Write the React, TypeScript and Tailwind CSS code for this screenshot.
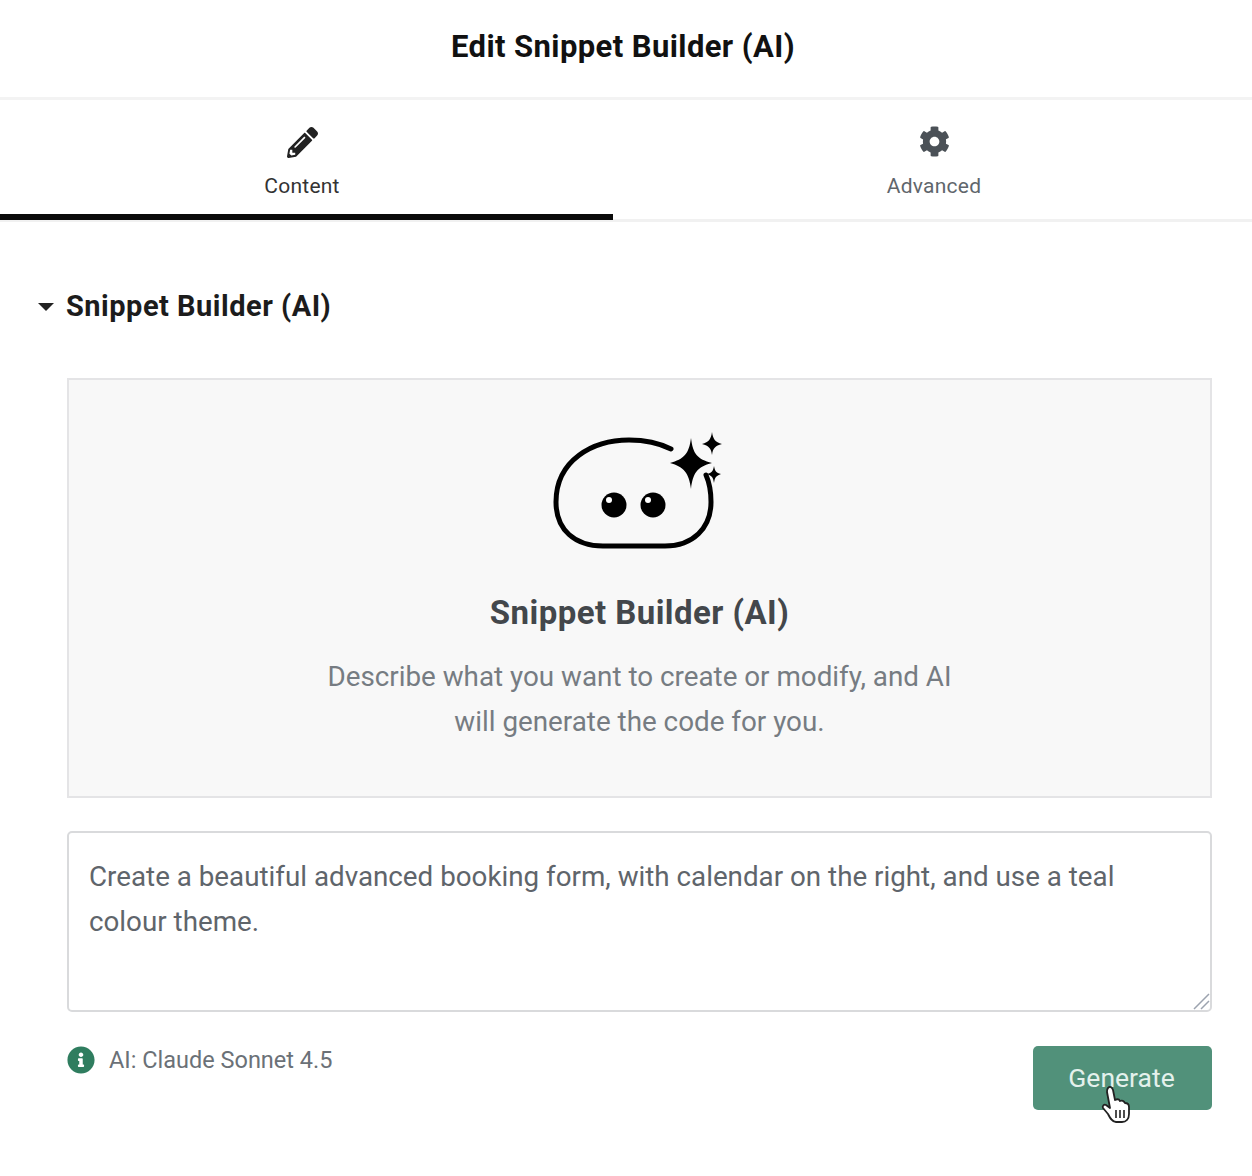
import { FaCog, FaInfoCircle, FaPencilAlt } from "react-icons/fa";

const Mascot = () => (
  <svg width="170" height="120" viewBox="0 0 170 120" className="block">
    <path
      d="M118 17 C104 10 92 8 76 8 C40 8 3 28 3 70 C3 98 22 114 50 114 L112 114 C140 114 158 96 158 70 C158 60 157 52 153 43"
      fill="none"
      stroke="#000"
      strokeWidth="5"
      strokeLinecap="round"
    />
    <path d="M138 6 C140 22 144 27 159 31 C144 35 140 41 138 57 C136 41 131 35 117 31 C131 27 136 22 138 6 Z" fill="#000" />
    <path d="M159 0 C160 7 162 10 169 12 C162 14 160 16 159 23 C158 16 156 14 149 12 C156 10 158 7 159 0 Z" fill="#000" />
    <path d="M161 34 C162 39 163 41 168 42 C163 44 162 45 161 51 C160 45 159 44 154 42 C159 41 160 39 161 34 Z" fill="#000" />
    <circle cx="61" cy="73" r="12.5" fill="#000" />
    <circle cx="100" cy="73" r="12.5" fill="#000" />
    <circle cx="56" cy="68" r="3" fill="#fff" />
    <circle cx="95" cy="68" r="3" fill="#fff" />
  </svg>
);

const HandCursor = () => (
  <svg width="30" height="40" viewBox="0 0 30 40" className="block">
    <path
      d="M7 3 C9 1 11 2 12 5 L14 15 C16 14 18 14 19 16 C21 15 23 16 24 18 C26 18 28 19 28 22 L28 29 C28 34 25 37 21 37 L15 37 C11 37 9 33 7 29 L2 23 C1 21 3 19 5 20 L9 23 L6 7 C6 5 6 4 7 3 Z"
      fill="#fff"
      stroke="#222"
      strokeWidth="1.8"
      strokeLinejoin="round"
    />
    <path d="M15 25 L15 33 M19 25 L19 33 M23 25 L23 33" stroke="#222" strokeWidth="1.6" />
  </svg>
);

const ResizeGrip = () => (
  <svg width="18" height="18" viewBox="0 0 18 18" className="block">
    <path d="M2 17 L17 2 M9 17 L17 9" stroke="#9ca3af" strokeWidth="1.5" />
  </svg>
);

export default function App() {
  return (
    <div className="w-[1252px] h-[1176px] bg-white font-['Roboto',sans-serif] overflow-hidden">
      <header className="h-[100px] pb-[5px] pr-[6px] flex items-center justify-center border-b-[3px] border-[#f3f3f3]">
        <h1 className="text-[31px] leading-none font-bold text-[#111] tracking-[0.4px]">Edit Snippet Builder (AI)</h1>
      </header>

      <nav className="grid grid-cols-2 h-[122px] border-b-[3px] border-[#f1f1f1]">
        <div className="flex flex-col items-center pt-[27px] pr-[9px] border-b-[6px] border-[#0b0b0b] h-[120px] -mb-[1px] w-[613px]">
          <FaPencilAlt className="w-[31px] h-[31px] text-[#222]" />
          <span className="mt-[16px] text-[21px] leading-6 text-[#333] tracking-[0.25px]">Content</span>
        </div>
        <div className="flex flex-col items-center pt-[26px] pr-[10px]">
          <FaCog className="w-[31px] h-[31px] text-[#4b5157]" />
          <span className="mt-[17px] text-[21px] leading-6 text-[#60666c] tracking-[0.25px]">Advanced</span>
        </div>
      </nav>

      <section className="pl-[67px] pr-10">
        <div className="relative pt-[66px] h-[156px]">
          <span className="absolute left-[-29px] top-[81px] w-0 h-0 border-x-[8px] border-t-[8px] border-x-transparent border-t-[#222]" />
          <h2 className="text-[29px] leading-9 font-bold text-[#1c1c1c] tracking-[0.5px] -ml-[1px]">Snippet Builder (AI)</h2>
        </div>

        <div className="h-[420px] pt-[52px] flex flex-col items-center bg-[#f8f8f8] border-2 border-[#e4e4e6]">
          <div className="ml-[-4px]">
            <Mascot />
          </div>
          <h3 className="mt-[41px] text-[33px] leading-10 font-bold text-[#43474b] tracking-[0.45px]">Snippet Builder (AI)</h3>
          <p className="mt-[21px] w-[660px] text-center text-[27.8px] leading-[45px] text-[#767c82]">
            Describe what you want to create or modify, and AI will generate the code for you.
          </p>
        </div>

        <div className="relative mt-[33px] h-[181px] border-2 border-[#d9dadc] rounded-[5px] pl-[20px] pr-[21px] pt-[21px] text-[27.78px] leading-[45px] text-[#5f656b]">
          Create a beautiful advanced booking form, with calendar on the right, and use a teal colour theme.
          <span className="absolute right-0 bottom-0">
            <ResizeGrip />
          </span>
        </div>

        <div className="flex items-start justify-between mt-[34px]">
          <div className="flex items-center gap-[14px]">
            <FaInfoCircle className="w-[28px] h-[28px] text-[#2f7d5f]" />
            <span className="text-[23.5px] leading-7 text-[#6b7177]">AI: Claude Sonnet 4.5</span>
          </div>
          <button className="relative w-[179px] h-[64px] bg-[#51917a] rounded-[5px] pr-[2px] text-[26.5px] text-[#e4f1ec]">
            Generate
            <span className="absolute left-[68px] top-[39px]">
              <HandCursor />
            </span>
          </button>
        </div>
      </section>
    </div>
  );
}
